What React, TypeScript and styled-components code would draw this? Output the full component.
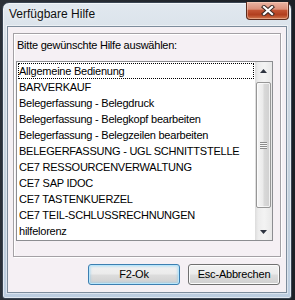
import styled, { createGlobalStyle, css } from 'styled-components';

const uiFont = css`
  font-family: 'Liberation Sans', Arial, Helvetica, sans-serif;
`;

const GlobalStyle = createGlobalStyle`
  html, body {
    margin: 0;
    padding: 0;
  }
  body {
    background: #1d2229;
    font-family: 'Liberation Sans', Arial, Helvetica, sans-serif;
  }
`;

const Desktop = styled.div`
  width: 295px;
  height: 300px;
  box-sizing: border-box;
  padding: 2px 0 0 2px;
  overflow: hidden;
  background: linear-gradient(90deg, #2b3038 0%, #1c2026 100%);
`;

const Window = styled.div`
  width: 290px;
  height: 297px;
  box-sizing: border-box;
  display: flex;
  flex-direction: column;
  padding: 0 4px 5px;
  border: 1px solid #3a4553;
  border-radius: 7px 7px 3px 3px;
  background: linear-gradient(180deg, #e1e8ef 0%, #cfd9e3 25%, #c1cfdc 70%, #bccde0 100%);
  box-shadow: inset 0 0 0 1px rgba(255, 255, 255, 0.55);
`;

const TitleBar = styled.div`
  height: 23px;
  display: flex;
  justify-content: space-between;
  align-items: flex-start;
`;

const Title = styled.div`
  ${uiFont};
  padding: 4px 0 0 2px;
  font-size: 12px;
  line-height: 15px;
  color: #101010;
  text-shadow: 0 0 6px rgba(255, 255, 255, 0.95);
`;

const CloseButton = styled.div`
  width: 43px;
  height: 18px;
  margin: -1px -2px 0 0;
  box-sizing: border-box;
  display: flex;
  align-items: center;
  justify-content: center;
  border: 1px solid #5b2a1c;
  border-top: none;
  border-radius: 0 0 4px 4px;
  background: linear-gradient(
    180deg,
    #eab5a4 0%,
    #dc907a 42%,
    #c25333 50%,
    #b13e1e 75%,
    #d2784f 100%
  );
  box-shadow: inset 0 0 0 1px rgba(255, 220, 200, 0.45);
`;

const Client = styled.div`
  height: 267px;
  box-sizing: border-box;
  display: flex;
  flex-direction: column;
  padding: 6px 5px;
  border: 1px solid #7d8c9c;
  background: #f5f0f4;
  box-shadow: 0 0 0 1px rgba(255, 255, 255, 0.45);
`;

const Panel = styled.div`
  height: 224px;
  box-sizing: border-box;
  padding: 5px 0 0 1px;
  border: 1px solid #a4a1a5;
  box-shadow: inset 1px 1px 0 #ffffff, 1px 1px 0 #ffffff;
`;

const Label = styled.div`
  ${uiFont};
  margin: 0 0 9px 2px;
  font-size: 11px;
  line-height: 13px;
  letter-spacing: -0.23px;
  color: #000;
`;

const ListBox = styled.div`
  width: 257px;
  height: 180px;
  margin-left: 1px;
  box-sizing: border-box;
  display: flex;
  border: 1px solid #8c8d91;
  background: #ffffff;
`;

const Items = styled.div`
  flex: 1;
  min-width: 0;
  padding: 1px 1px 0;
`;

const Row = styled.div<{ $focused?: boolean }>`
  ${uiFont};
  height: 16px;
  box-sizing: border-box;
  border: 1px dotted ${(p) => (p.$focused ? '#000' : 'transparent')};
  font-size: 11px;
  line-height: 14px;
  letter-spacing: -0.23px;
  color: #000;
  white-space: nowrap;
  overflow: hidden;
`;

const ScrollBar = styled.div`
  width: 17px;
  display: flex;
  flex-direction: column;
  background: linear-gradient(90deg, #dcdcdc 0%, #ececec 18%, #f3f3f3 55%, #e8e8e8 100%);
`;

const ArrowButton = styled.div`
  height: 17px;
  display: flex;
  align-items: center;
  justify-content: center;
`;

const Track = styled.div`
  flex: 1;
  display: flex;
  flex-direction: column;
`;

const Thumb = styled.div`
  height: 126px;
  margin: 3px 1px 0 1px;
  box-sizing: border-box;
  display: flex;
  align-items: center;
  justify-content: center;
  border: 1px solid #979797;
  border-radius: 2px;
  background: linear-gradient(90deg, #f6f6f6 0%, #ebebeb 45%, #d9d9d9 55%, #d0d0d0 100%);
  box-shadow: inset 0 0 0 1px rgba(255, 255, 255, 0.7);
`;

const Grip = styled.div`
  width: 7px;
  height: 7px;
  background: repeating-linear-gradient(180deg, #8c8c8c 0 1px, #f7f7f7 1px 2px);
`;

const ButtonRow = styled.div`
  display: flex;
  justify-content: flex-end;
  gap: 8px;
  margin-top: 7px;
  padding-right: 1px;
`;

const Button = styled.div<{ $default?: boolean }>`
  ${uiFont};
  width: 92px;
  height: 21px;
  box-sizing: border-box;
  display: flex;
  align-items: center;
  justify-content: center;
  padding-bottom: 1px;
  border: 1px solid ${(p) => (p.$default ? '#3c7fb1' : '#707070')};
  border-radius: 3px;
  background: linear-gradient(180deg, #f2f2f2 0%, #ebebeb 48%, #dddddd 52%, #cfcfcf 100%);
  box-shadow: ${(p) =>
    p.$default
      ? 'inset 0 0 0 1px #b9e6fb, inset 0 0 2px 2px rgba(120, 200, 240, 0.35)'
      : 'inset 0 0 0 1px #fbfbfb'};
  font-size: 11px;
  letter-spacing: -0.2px;
  color: #000;
`;

const entries = [
  'Allgemeine Bedienung',
  'BARVERKAUF',
  'Belegerfassung - Belegdruck',
  'Belegerfassung - Belegkopf bearbeiten',
  'Belegerfassung - Belegzeilen bearbeiten',
  'BELEGERFASSUNG - UGL SCHNITTSTELLE',
  'CE7 RESSOURCENVERWALTUNG',
  'CE7 SAP IDOC',
  'CE7 TASTENKUERZEL',
  'CE7 TEIL-SCHLUSSRECHNUNGEN',
  'hilfelorenz',
];

const CloseGlyph = () => (
  <svg width="14" height="11" viewBox="0 0 14 11">
    <path d="M3 2 L11 9 M11 2 L3 9" stroke="#3d2b27" strokeWidth="4.2" strokeLinecap="square" />
    <path d="M3 2 L11 9 M11 2 L3 9" stroke="#ffffff" strokeWidth="2.2" strokeLinecap="square" />
  </svg>
);

const Arrow = ({ down }: { down?: boolean }) => (
  <svg width="7" height="4" viewBox="0 0 7 4">
    <path d={down ? 'M0 0 L7 0 L3.5 4Z' : 'M3.5 0 L7 4 L0 4Z'} fill="#2e3440" />
  </svg>
);

const App = () => {
  return (
    <>
      <GlobalStyle />
      <Desktop>
        <Window>
          <TitleBar>
            <Title>Verfügbare Hilfe</Title>
            <CloseButton>
              <CloseGlyph />
            </CloseButton>
          </TitleBar>
          <Client>
            <Panel>
              <Label>Bitte gewünschte Hilfe auswählen:</Label>
              <ListBox>
                <Items>
                  {entries.map((e, i) => (
                    <Row key={e} $focused={i === 0}>
                      {e}
                    </Row>
                  ))}
                </Items>
                <ScrollBar>
                  <ArrowButton>
                    <Arrow />
                  </ArrowButton>
                  <Track>
                    <Thumb>
                      <Grip />
                    </Thumb>
                  </Track>
                  <ArrowButton>
                    <Arrow down />
                  </ArrowButton>
                </ScrollBar>
              </ListBox>
            </Panel>
            <ButtonRow>
              <Button $default>F2-Ok</Button>
              <Button>Esc-Abbrechen</Button>
            </ButtonRow>
          </Client>
        </Window>
      </Desktop>
    </>
  );
};

export default App;
